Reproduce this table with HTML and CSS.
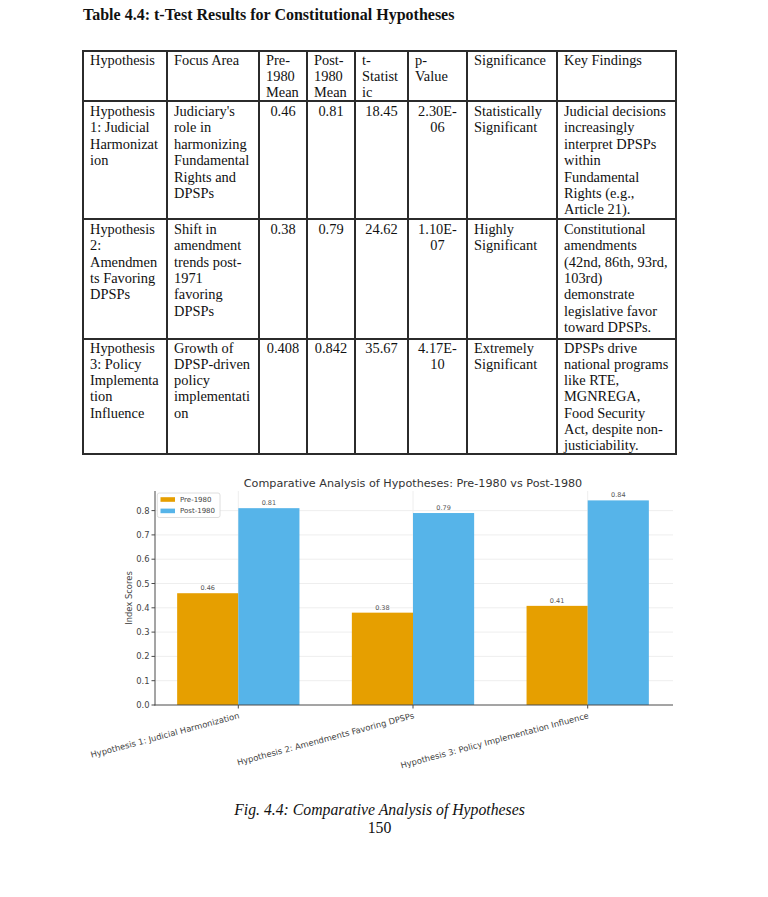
FILE: index.html
```html
<!DOCTYPE html>
<html>
<head>
<meta charset="utf-8">
<link rel="stylesheet" href="styles.css">
</head>
<body>
<div class="page">
  <h1 class="tbl-title">Table 4.4: t-Test Results for Constitutional Hypotheses</h1>
  <table class="tbl">
    <colgroup>
      <col class="c1"><col class="c2"><col class="c3"><col class="c4"><col class="c5"><col class="c6"><col class="c7"><col class="c8">
    </colgroup>
    <tr class="rh">
      <td>Hypothesis</td>
      <td>Focus Area</td>
      <td>Pre-<br>1980<br>Mean</td>
      <td>Post-<br>1980<br>Mean</td>
      <td>t-<br>Statist<br>ic</td>
      <td>p-<br>Value</td>
      <td>Significance</td>
      <td>Key Findings</td>
    </tr>
    <tr class="r1">
      <td>Hypothesis<br>1: Judicial<br>Harmonizat<br>ion</td>
      <td>Judiciary's<br>role in<br>harmonizing<br>Fundamental<br>Rights and<br>DPSPs</td>
      <td class="num">0.46</td>
      <td class="num">0.81</td>
      <td class="num">18.45</td>
      <td class="num">2.30E-<br>06</td>
      <td>Statistically<br>Significant</td>
      <td>Judicial decisions<br>increasingly<br>interpret DPSPs<br>within<br>Fundamental<br>Rights (e.g.,<br>Article 21).</td>
    </tr>
    <tr class="r2">
      <td>Hypothesis<br>2:<br>Amendmen<br>ts Favoring<br>DPSPs</td>
      <td>Shift in<br>amendment<br>trends post-<br>1971<br>favoring<br>DPSPs</td>
      <td class="num">0.38</td>
      <td class="num">0.79</td>
      <td class="num">24.62</td>
      <td class="num">1.10E-<br>07</td>
      <td>Highly<br>Significant</td>
      <td>Constitutional<br>amendments<br>(42nd, 86th, 93rd,<br>103rd)<br>demonstrate<br>legislative favor<br>toward DPSPs.</td>
    </tr>
    <tr class="r3">
      <td>Hypothesis<br>3: Policy<br>Implementa<br>tion<br>Influence</td>
      <td>Growth of<br>DPSP-driven<br>policy<br>implementati<br>on</td>
      <td class="num">0.408</td>
      <td class="num">0.842</td>
      <td class="num">35.67</td>
      <td class="num">4.17E-<br>10</td>
      <td>Extremely<br>Significant</td>
      <td>DPSPs drive<br>national programs<br>like RTE,<br>MGNREGA,<br>Food Security<br>Act, despite non-<br>justiciability.</td>
    </tr>
  </table>

  <svg class="chart" width="768" height="320" viewBox="0 460 768 320" xmlns="http://www.w3.org/2000/svg">
    <g class="grid">
      <line x1="155" y1="679.7" x2="673" y2="679.7"/>
      <line x1="155" y1="655.4" x2="673" y2="655.4"/>
      <line x1="155" y1="631.1" x2="673" y2="631.1"/>
      <line x1="155" y1="606.8" x2="673" y2="606.8"/>
      <line x1="155" y1="582.5" x2="673" y2="582.5"/>
      <line x1="155" y1="558.2" x2="673" y2="558.2"/>
      <line x1="155" y1="533.9" x2="673" y2="533.9"/>
      <line x1="155" y1="509.6" x2="673" y2="509.6"/>
      <line x1="238.3" y1="490" x2="238.3" y2="704"/>
      <line x1="413" y1="490" x2="413" y2="704"/>
      <line x1="587.7" y1="490" x2="587.7" y2="704"/>
    </g>
    <g class="bars-pre">
      <rect x="177.15" y="592.22" width="61.15" height="111.78"/>
      <rect x="351.85" y="611.66" width="61.15" height="92.34"/>
      <rect x="526.55" y="604.86" width="61.15" height="99.14"/>
    </g>
    <g class="bars-post">
      <rect x="238.3" y="507.17" width="61.15" height="196.83"/>
      <rect x="413" y="512.03" width="61.15" height="191.97"/>
      <rect x="587.7" y="499.39" width="61.15" height="204.61"/>
    </g>
    <g class="vals">
      <text x="207.7" y="589">0.46</text>
      <text x="268.9" y="504">0.81</text>
      <text x="382.4" y="608.5">0.38</text>
      <text x="443.6" y="509">0.79</text>
      <text x="557.1" y="601.8">0.41</text>
      <text x="618.3" y="496.3">0.84</text>
    </g>
    <g class="spines">
      <line x1="155" y1="490" x2="155" y2="704.5"/>
      <line x1="154.5" y1="704" x2="673" y2="704"/>
      <line x1="151.5" y1="704" x2="155" y2="704"/>
      <line x1="151.5" y1="679.7" x2="155" y2="679.7"/>
      <line x1="151.5" y1="655.4" x2="155" y2="655.4"/>
      <line x1="151.5" y1="631.1" x2="155" y2="631.1"/>
      <line x1="151.5" y1="606.8" x2="155" y2="606.8"/>
      <line x1="151.5" y1="582.5" x2="155" y2="582.5"/>
      <line x1="151.5" y1="558.2" x2="155" y2="558.2"/>
      <line x1="151.5" y1="533.9" x2="155" y2="533.9"/>
      <line x1="151.5" y1="509.6" x2="155" y2="509.6"/>
      <line x1="238.3" y1="704" x2="238.3" y2="707.5"/>
      <line x1="413" y1="704" x2="413" y2="707.5"/>
      <line x1="587.7" y1="704" x2="587.7" y2="707.5"/>
    </g>
    <g class="yticks">
      <text x="149.5" y="707">0.0</text>
      <text x="149.5" y="682.7">0.1</text>
      <text x="149.5" y="658.4">0.2</text>
      <text x="149.5" y="634.1">0.3</text>
      <text x="149.5" y="609.8">0.4</text>
      <text x="149.5" y="585.5">0.5</text>
      <text x="149.5" y="561.2">0.6</text>
      <text x="149.5" y="536.9">0.7</text>
      <text x="149.5" y="512.6">0.8</text>
    </g>
    <text class="ylabel" transform="translate(132 597) rotate(-90)">Index Scores</text>
    <g class="xlabels">
      <text transform="translate(238.3 711) rotate(-15)" y="6.3">Hypothesis 1: Judicial Harmonization</text>
      <text transform="translate(413 711) rotate(-15)" y="6.3">Hypothesis 2: Amendments Favoring DPSPs</text>
      <text transform="translate(587.7 711) rotate(-15)" y="6.3">Hypothesis 3: Policy Implementation Influence</text>
    </g>
    <text class="ch-title" x="413" y="485.7">Comparative Analysis of Hypotheses: Pre-1980 vs Post-1980</text>
    <g class="legend">
      <rect class="lg-box" x="157.3" y="492" width="62.7" height="24.5" rx="2"/>
      <rect class="lg-pre" x="160.5" y="496.2" width="14.5" height="4.6"/>
      <rect class="lg-post" x="160.5" y="507.6" width="14.5" height="4.6"/>
      <text x="180" y="501">Pre-1980</text>
      <text x="180" y="512.4">Post-1980</text>
    </g>
  </svg>

  <div class="caption">
    <p class="fig">Fig. 4.4: Comparative Analysis of Hypotheses</p>
    <p class="pno">150</p>
  </div>
</div>
</body>
</html>
```

FILE: styles.css
```css
html, body {
  margin: 0;
  padding: 0;
  background: #ffffff;
}
.page {
  width: 768px;
  min-height: 897px;
  font-family: "Liberation Serif", "Times New Roman", serif;
  color: #111;
}
.tbl-title {
  margin: 0 0 0 83px;
  padding-top: 6px;
  font-size: 16px;
  line-height: 18px;
  font-weight: bold;
  color: #111;
}
.tbl {
  margin: 26px 0 0 82px;
  border-collapse: collapse;
  table-layout: fixed;
  width: 593px;
  font-size: 14.4px;
  line-height: 16.4px;
}
.c1 { width: 84px; }
.c2 { width: 92px; }
.c3 { width: 48px; }
.c4 { width: 48px; }
.c5 { width: 53px; }
.c6 { width: 59px; }
.c7 { width: 90px; }
.c8 { width: 119px; }
.tbl td {
  border: 2px solid #2b2b2b;
  vertical-align: top;
  padding: 1px 2px 0 6px;
  white-space: nowrap;
  overflow: hidden;
  text-align: left;
}
.tbl td.num {
  text-align: center;
  padding-left: 2px;
}
.rh td {
  padding-top: 0;
  line-height: 16px;
}
.r2 td { padding-bottom: 2px; }
.r3 td {
  padding-top: 0;
  line-height: 16.2px;
}

.chart {
  display: block;
  margin-top: 6px;
}
.grid line {
  stroke: #ececec;
  stroke-width: 0.9;
}
.bars-pre rect { fill: #e69f00; }
.bars-post rect { fill: #56b4e9; }
.spines line {
  stroke: #4a4a4a;
  stroke-width: 1;
}
.chart text {
  font-family: "DejaVu Sans", sans-serif;
}
.vals text {
  font-size: 6.5px;
  fill: #555;
  text-anchor: middle;
}
.yticks text {
  font-size: 8.4px;
  fill: #444;
  text-anchor: end;
}
.ylabel {
  font-size: 8.4px;
  fill: #444;
  text-anchor: middle;
}
.xlabels text {
  font-size: 8.4px;
  fill: #444;
  text-anchor: end;
}
.ch-title {
  font-size: 11.2px;
  fill: #333;
  text-anchor: middle;
}
.lg-box {
  fill: #ffffff;
  stroke: #d6d6d6;
  stroke-width: 0.8;
}
.lg-pre { fill: #e69f00; }
.lg-post { fill: #56b4e9; }
.legend text {
  font-size: 7px;
  fill: #444;
}
.caption {
  width: 759px;
  margin-top: 20px;
  text-align: center;
  font-size: 15.75px;
  line-height: 18px;
}
.caption p { margin: 0; }
.fig { font-style: italic; }
```
